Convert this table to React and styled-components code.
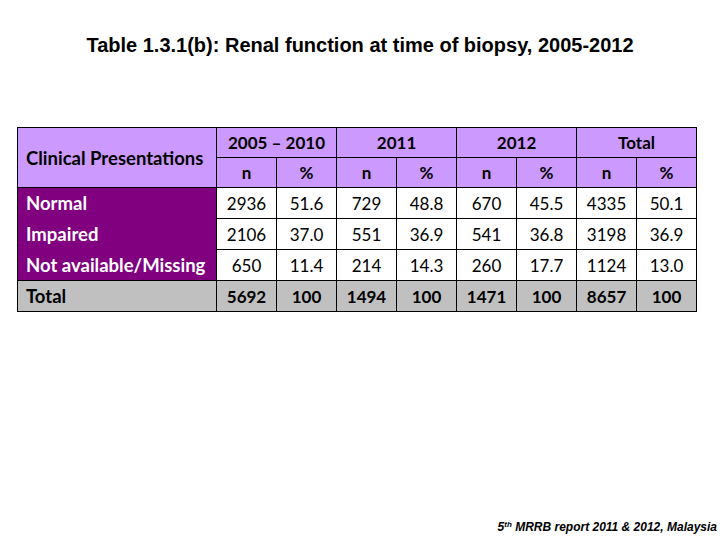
import React from "react";
import styled, { createGlobalStyle } from "styled-components";

const Global = createGlobalStyle`
  html, body { margin: 0; padding: 0; background: #ffffff; }
`;

const Page = styled.div`
  width: 720px;
  height: 540px;
  display: flex;
  flex-direction: column;
  box-sizing: border-box;
  padding: 33px 0 0 0;
  background: #ffffff;
`;

const Title = styled.h1`
  margin: 0;
  font-family: "Liberation Sans", Arial, sans-serif;
  font-weight: bold;
  font-size: 20px;
  line-height: 24px;
  color: #000;
  text-align: center;
`;

const Table = styled.table`
  margin: 70px 0 0 17px;
  border-collapse: collapse;
  table-layout: fixed;
  width: 680px;
  font-family: Lato, "Open Sans", sans-serif;
  font-size: 17px;
  color: #000;
`;

const HeadLabel = styled.th`
  background: #cc99ff;
  border: 1px solid #000;
  text-align: left;
  padding: 0 0 0 8px;
  font-weight: bold;
  font-size: 18.5px;
  white-space: nowrap;
  vertical-align: middle;
`;

const HeadCell = styled.th`
  background: #cc99ff;
  border: 1px solid #000;
  height: 29px;
  padding: 0;
  text-align: center;
  font-weight: bold;
`;

const RowLabel = styled.td`
  background: ${(p) => (p.$total ? "#c0c0c0" : "#800080")};
  color: ${(p) => (p.$total ? "#000" : "#fff")};
  border-left: 1px solid #000;
  border-right: 1px solid #000;
  border-top: ${(p) => (p.$total ? "1px solid #000" : "none")};
  border-bottom: ${(p) => (p.$total ? "1px solid #000" : "none")};
  padding: 0 0 0 8px;
  font-weight: bold;
  font-size: 18.5px;
  white-space: nowrap;
  height: 30px;
`;

const DataCell = styled.td`
  background: ${(p) => (p.$total ? "#c0c0c0" : "#ffffff")};
  border: 1px solid #000;
  text-align: center;
  padding: 0;
  font-weight: ${(p) => (p.$total ? "bold" : "normal")};
  height: 30px;
`;

const Footer = styled.div`
  margin-top: auto;
  align-self: flex-end;
  margin-right: 3px;
  margin-bottom: 6px;
  font-family: "Liberation Sans", Arial, sans-serif;
  font-weight: bold;
  font-style: italic;
  font-size: 12px;
  color: #000;
`;

const Sup = styled.sup`
  font-size: 8px;
  vertical-align: 4px;
  line-height: 0;
`;

const groups = ["2005 \u2013 2010", "2011", "2012", "Total"];

const rows = [
  { label: "Normal", values: ["2936", "51.6", "729", "48.8", "670", "45.5", "4335", "50.1"] },
  { label: "Impaired", values: ["2106", "37.0", "551", "36.9", "541", "36.8", "3198", "36.9"] },
  { label: "Not available/Missing", values: ["650", "11.4", "214", "14.3", "260", "17.7", "1124", "13.0"] },
  { label: "Total", total: true, values: ["5692", "100", "1494", "100", "1471", "100", "8657", "100"] },
];

export default function App() {
  return (
    <Page>
      <Global />
      <Title>Table 1.3.1(b): Renal function at time of biopsy, 2005-2012</Title>
      <Table>
        <colgroup>
          <col style={{ width: 199 }} />
          {Array.from({ length: 8 }).map((_, i) => (
            <col key={i} style={{ width: 60 }} />
          ))}
        </colgroup>
        <thead>
          <tr>
            <HeadLabel rowSpan={2}>Clinical Presentations</HeadLabel>
            {groups.map((g) => (
              <HeadCell key={g} colSpan={2}>{g}</HeadCell>
            ))}
          </tr>
          <tr>
            {groups.map((g) => (
              <React.Fragment key={g}>
                <HeadCell>n</HeadCell>
                <HeadCell>%</HeadCell>
              </React.Fragment>
            ))}
          </tr>
        </thead>
        <tbody>
          {rows.map((r) => (
            <tr key={r.label}>
              <RowLabel $total={r.total}>{r.label}</RowLabel>
              {r.values.map((v, i) => (
                <DataCell key={i} $total={r.total}>{v}</DataCell>
              ))}
            </tr>
          ))}
        </tbody>
      </Table>
      <Footer>
        5<Sup>th</Sup> MRRB report 2011 &amp; 2012, Malaysia
      </Footer>
    </Page>
  );
}
